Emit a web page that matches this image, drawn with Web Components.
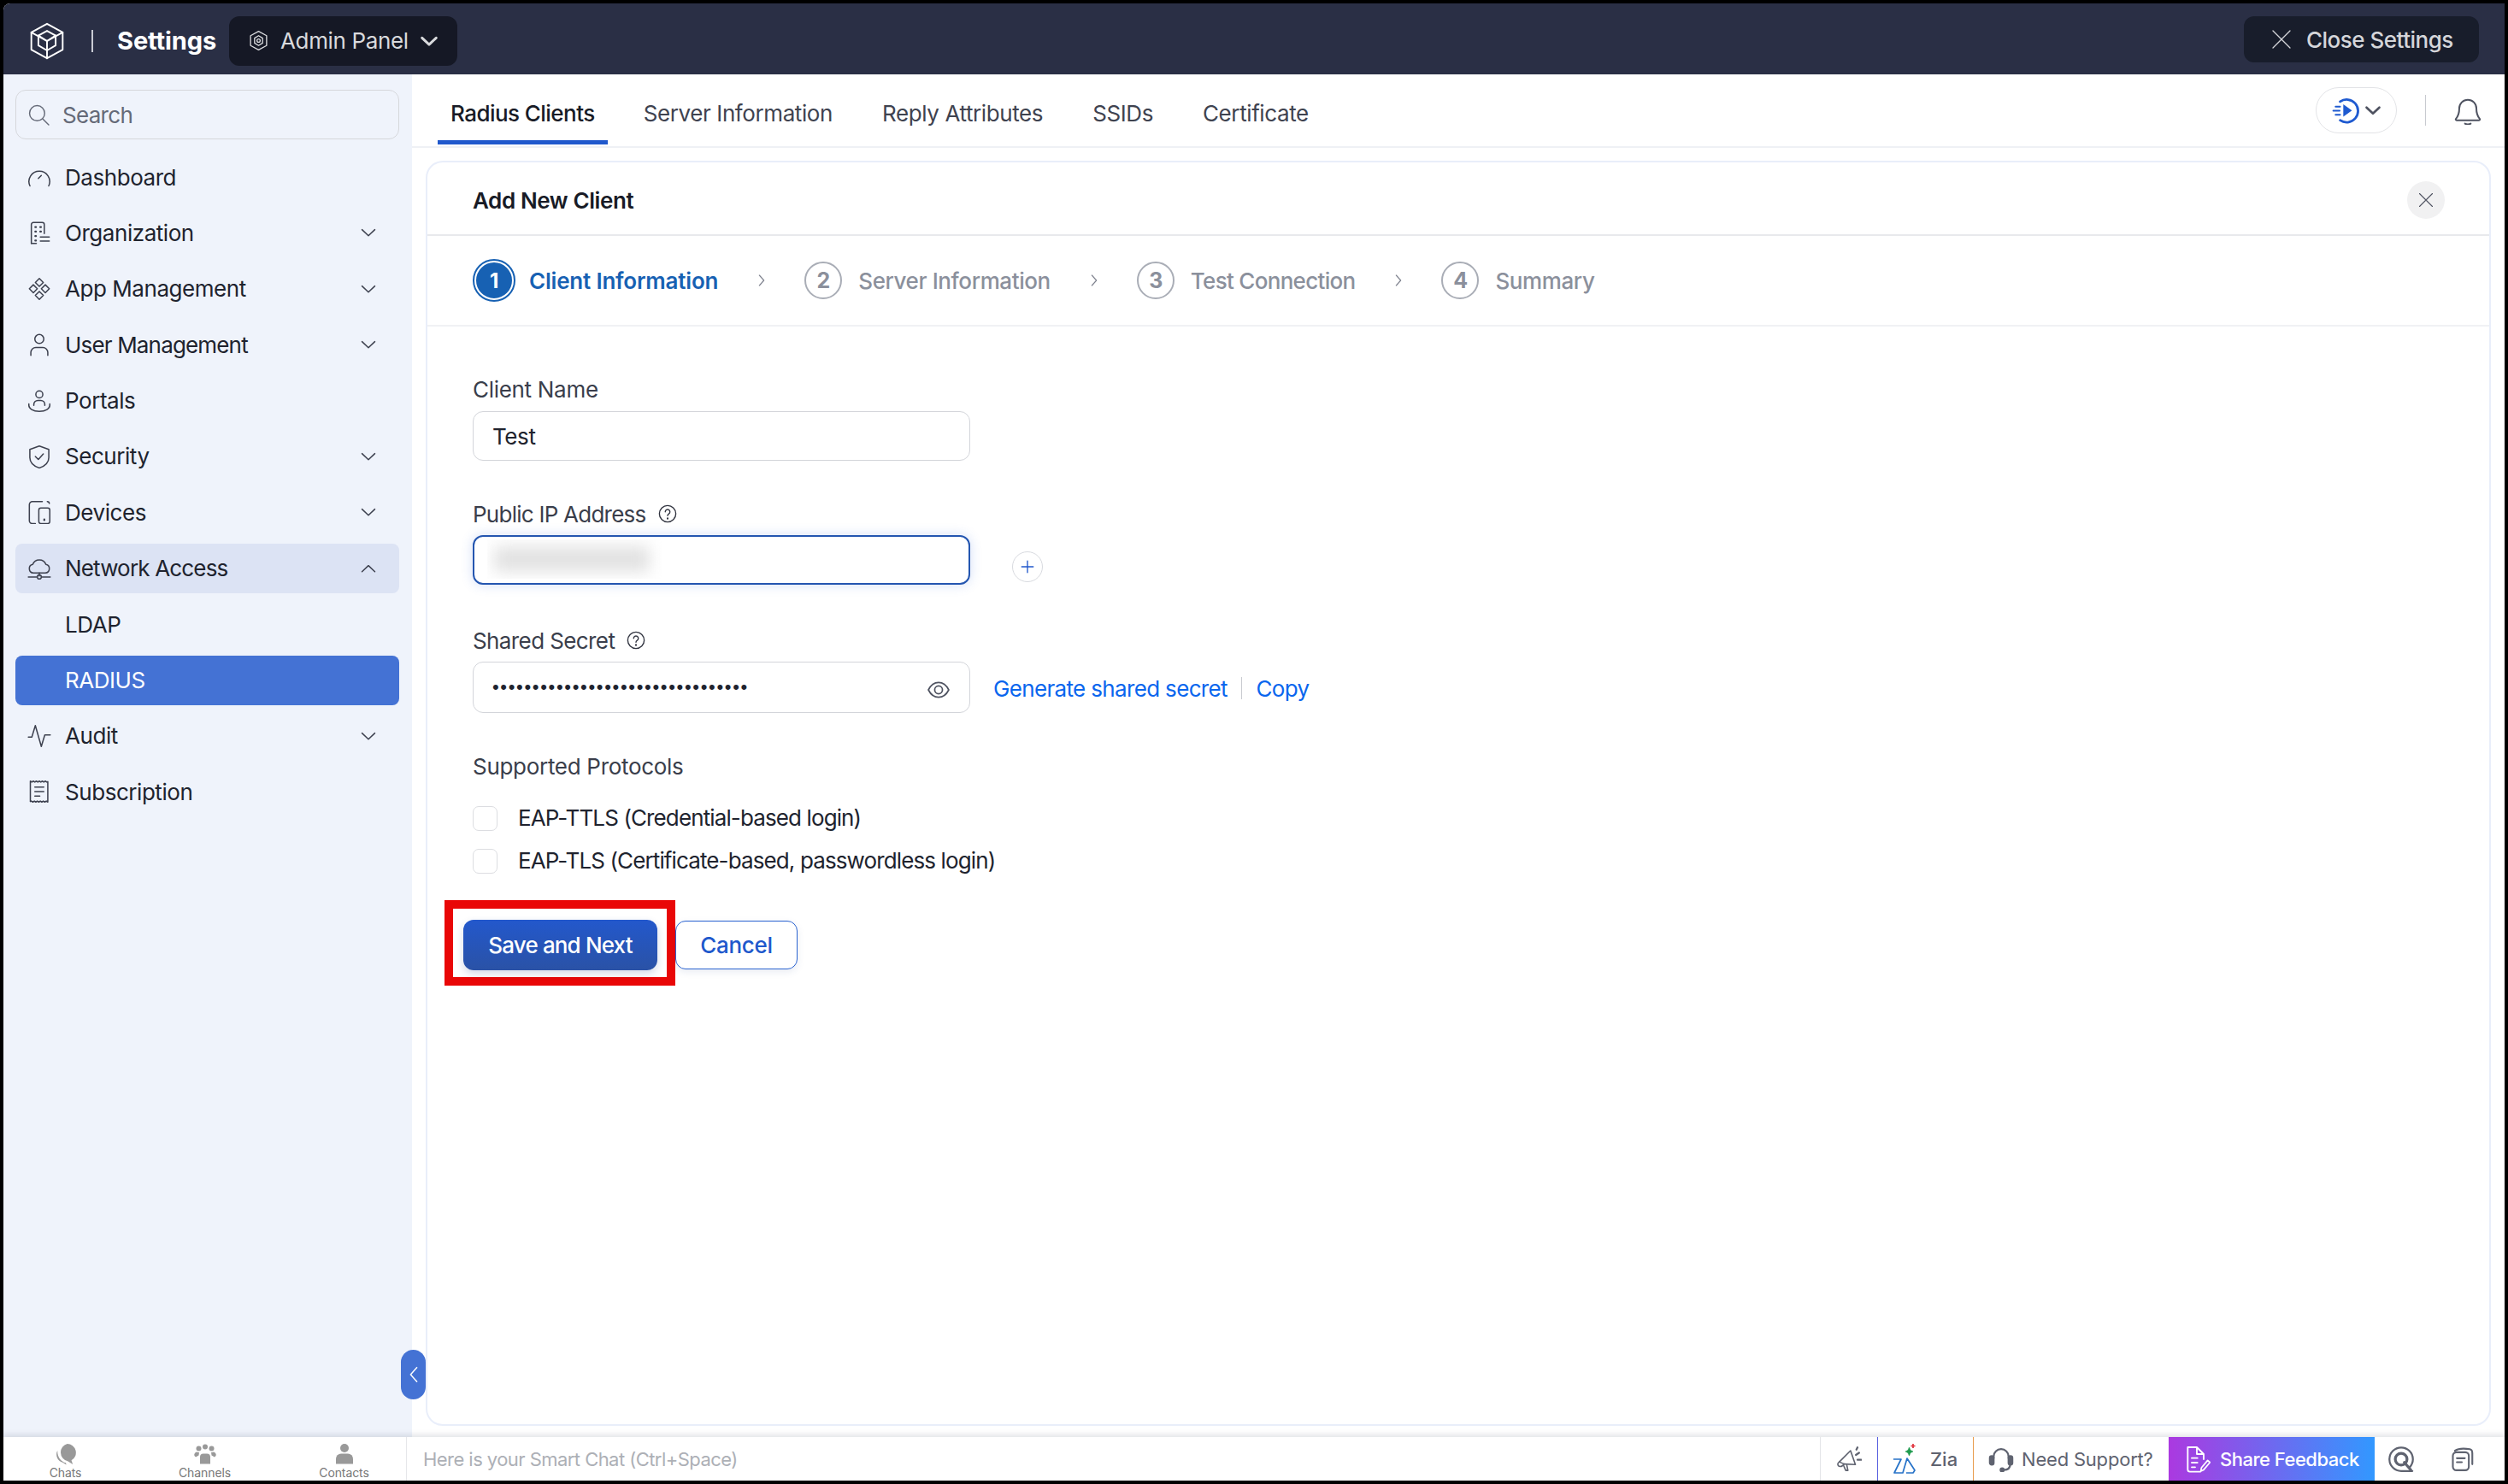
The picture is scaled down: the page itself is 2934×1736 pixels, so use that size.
<!DOCTYPE html>
<html lang="en">
<head>
<meta charset="utf-8">
<title>Settings - Add New Client</title>
<style>
  html, body { margin: 0; background: #000; }
  body { padding: 4px; width: 2926px; height: 1728px; font-family: Inter, "Noto Sans", sans-serif; }
</style>
</head>
<body>
<settings-app>
  <top-bar slot="top"></top-bar>
  <side-bar slot="side">
    <nav-item icon="dashboard">Dashboard</nav-item>
    <nav-item icon="org" caret="down">Organization</nav-item>
    <nav-item icon="apps" caret="down">App Management</nav-item>
    <nav-item icon="user" caret="down" style="letter-spacing:-0.83px">User Management</nav-item>
    <nav-item icon="portal">Portals</nav-item>
    <nav-item icon="shield" caret="down">Security</nav-item>
    <nav-item icon="devices" caret="down">Devices</nav-item>
    <nav-item icon="cloud" caret="up" state="open" style="letter-spacing:-0.83px">Network Access</nav-item>
    <nav-item>LDAP</nav-item>
    <nav-item state="active">RADIUS</nav-item>
    <nav-item icon="pulse" caret="down">Audit</nav-item>
    <nav-item icon="receipt">Subscription</nav-item>
  </side-bar>
  <tab-bar slot="tabs">
    <tab-item active>Radius Clients</tab-item>
    <tab-item>Server Information</tab-item>
    <tab-item>Reply Attributes</tab-item>
    <tab-item>SSIDs</tab-item>
    <tab-item>Certificate</tab-item>
  </tab-bar>
  <client-card slot="main">
    <step-list slot="steps">
      <step-item num="1" active>Client Information</step-item>
      <step-item num="2" style="letter-spacing:-0.4px">Server Information</step-item>
      <step-item num="3" style="letter-spacing:-0.7px">Test Connection</step-item>
      <step-item num="4" last style="letter-spacing:-0.4px">Summary</step-item>
    </step-list>
    <form-field label="Client Name" style="--label-gap:11px;margin-bottom:48px">
      <text-box>Test</text-box>
    </form-field>
    <form-field label="Public IP Address" help style="--label-gap:10px;--label-ls:-0.75px;margin-bottom:50px;margin-top:-1px">
      <text-box focused></text-box>
      <add-button></add-button>
    </form-field>
    <form-field label="Shared Secret" help style="--label-gap:10px;--label-ls:-0.6px;margin-bottom:47px">
      <text-box secret style="--box-h:60px">••••••••••••••••••••••••••••••••</text-box>
      <link-row></link-row>
    </form-field>
    <form-field label="Supported Protocols" style="--label-gap:32px;margin-bottom:31px">
      <check-list></check-list>
    </form-field>
    <form-actions></form-actions>
  </client-card>
  <chat-bar slot="bottom"></chat-bar>
</settings-app>

<script>
const ICONS = {
  dashboard: '<path d="M2.6 21a10.4 10.4 0 1 1 18.8 0"/><path d="M11 13.5l3-3"/>',
  org: '<path d="M4 23V4a2 2 0 0 1 2-2h9a2 2 0 0 1 2 2v9"/><path d="M4 23h5"/><path d="M8 6.5h.6M13 6.5h.6M8 11h.6M13 11h.6M8 15.5h.6M8 20h.6" stroke-width="2"/><path d="M13 16.5h9M13 20.5h9"/>',
  apps: '<path d="M12 1.5l4 4-4 4-4-4zM6 7.8l4 4-4 4-4-4zM18 7.8l4 4-4 4-4-4zM12 14.5l4 4-4 4-4-4z"/>',
  user: '<circle cx="12" cy="6.5" r="4.5"/><path d="M3.5 23v-3a5 5 0 0 1 5-5h7a5 5 0 0 1 5 5v3"/>',
  portal: '<circle cx="12" cy="5.5" r="3.5"/><path d="M6.5 16.5v-1a4 4 0 0 1 4-4h3a4 4 0 0 1 4 4v1"/><path d="M1.5 15c-.6 5 4.600 7.500 10.500 7.500S23.100 20 22.500 15"/>',
  shield: '<path d="M12 1.500l9.500 3.500v8c0 5-3.800 8.500-9.500 10.500C6.300 21.500 2.500 18 2.500 13V5z"/><path d="M8 12l3 3 5-5.500"/>',
  devices: '<path d="M15 1.500H5a3 3 0 0 0-3 3v16a3 3 0 0 0 3 3h3"/><path d="M20 1.500a2 2 0 0 1 2 2"/><rect x="11.500" y="8" width="11" height="15.500" rx="2"/><path d="M17 19.500v.5" stroke-width="2"/>',
  cloud: '<path d="M6 16.500a4.300 4.300 0 0 1-.6-8.500A7 7 0 0 1 18.600 8a4.300 4.300 0 0 1-.6 8.500z"/><path d="M12 16.500v3M1 20.500h8.500M14.500 20.500H23"/><circle cx="12" cy="20.500" r="2"/>',
  pulse: '<path d="M1 13h3.500l3.500-11.500 6 21 3.500-11.500H23"/>',
  receipt: '<path d="M3 1.500l1.500 1 1.500-1 1.500 1 1.500-1 1.500 1 1.500-1 1.500 1 1.500-1 1.500 1 1.500-1 1.500 1 1 -.5V22.500l-1.500-1-1.500 1-1.500-1-1.500 1-1.500-1-1.500 1-1.500-1-1.500 1-1.500-1-1.500 1-1.500-1-1 .5z"/><path d="M7.500 7.500h9M7.500 12h9M7.500 16.500h5"/>',
  search: '<circle cx="10" cy="10" r="8.500"/><path d="M16.500 16.500L23 23"/>',
  down: '<path d="M3 8l9 8.500L21 8"/>',
  up: '<path d="M3 16.500L12 8l9 8.500"/>',
  close: '<path d="M2 2l20 20M22 2L2 22"/>',
  right: '<path d="M8 3l8 9-8 9"/>',
  left: '<path d="M16 3L8 12l8 9"/>',
  plus: '<path d="M12 3v18M3 12h18"/>',
  eye: '<path d="M1 12c2.500-5 6.500-8 11-8s8.500 3 11 8c-2.500 5-6.500 8-11 8S3.500 17 1 12z"/><circle cx="12" cy="12" r="4.200"/>',
  help: '<circle cx="12" cy="12" r="10.500"/><path d="M9 9.500a3 3 0 1 1 4.500 2.600c-1 .6-1.500 1.200-1.500 2.400"/><path d="M12 17.600v.6" stroke-width="2.200"/>',
  bell: '<path d="M12 2a7.500 7.500 0 0 0-7.500 7.500c0 5-1 7-3 9.300-.4.500 0 1.200.6 1.200h19.800c.6 0 1-.7.6-1.200-2-2.300-3-4.300-3-9.300A7.500 7.500 0 0 0 12 2z"/><path d="M9.500 23c1.500.8 3.500.8 5 0"/>',
  logo: '<path d="M12 1l10 5.500v11L12 23 2 17.500v-11z"/><path d="M2 6.500L12 12l10-5.500M12 12v11"/><path d="M12 5.500l5.500 3v6.300L12 18l-5.500-3.200V8.500z"/><path d="M6.500 8.500L12 12l5.500-3.500"/>',
  hex: '<path d="M12 1.500l9 5v11l-9 5-9-5v-11z"/><path d="M12 6.500l4.500 2.700v5.600L12 17.500l-4.500-2.700V9.200z"/><circle cx="12" cy="12" r="1.800"/>',
  mega: '<path d="M3 14.500L13.500 4l4.500 13-10.500-.5z"/><path d="M3 14.500c-1.500 1-1.800 2.500-1 3.500s2.500 1.200 4 0l1.500-1.500"/><path d="M7 18l2 4.500h2l-1-5"/><path d="M18.500 8l3-2M20 12.500h3.500M19 3l1-2" stroke-width="1.800"/>',
  headset: '<path d="M5 11V9.500a7 7 0 0 1 14 0V11"/><rect x="1.500" y="9" width="3.500" height="8" rx="1.700" fill="currentColor"/><rect x="19" y="9" width="3.500" height="8" rx="1.700" fill="currentColor"/><path d="M20.500 17c0 3.500-2.500 5-6 5"/><circle cx="13" cy="22" r="1.500" fill="currentColor"/>',
  doc: '<path d="M4 1.500h8l6 6V12M12 1.500v6h6M15 23H6a2 2 0 0 1-2-2V1.500"/><path d="M7.500 11h5M7.500 15h5M7.500 19h3"/><path d="M15.500 22.500l.5-3 5.500-6.500 2 1.800-5.500 6.500z" stroke-width="1.300"/>',
  target: '<path d="M22.500 23H12A11 11 0 1 1 23 12c0 3-1.200 5.500-3 7.500"/><circle cx="12" cy="12" r="5.500" stroke-width="2.600"/><path d="M15 15l6 7" stroke-width="2.600"/>',
  notes: '<rect x="3" y="5" width="16" height="18" rx="3.500"/><path d="M5 3.500C8 1.500 14 1 20 2c2 .4 2.500 2 2.500 4v11"/><path d="M7 11h8M7 15h5"/>'
};

const svg = (name, size, width = 1.4, extra = "") =>
  `<svg viewBox="0 0 24 24" width="${size}" height="${size}" fill="none" stroke="currentColor" stroke-width="${width}" stroke-linecap="round" stroke-linejoin="round" ${extra}>${ICONS[name]}</svg>`;

class Base extends HTMLElement {
  paint(css, html) {
    if (this.shadowRoot) return;
    this.attachShadow({ mode: "open" }).innerHTML = `<style>${css}</style>${html}`;
  }
}

class SettingsApp extends Base {
  connectedCallback() {
    this.paint(`
      :host { display: grid; grid-template-columns: 478px 1fr; grid-template-rows: 83px 1fr 51px; width: 2926px; height: 1728px; background: #fff; border-top-left-radius: 8px; overflow: hidden; position: relative; }
      .top { grid-column: 1 / 3; }
      .main { display: flex; flex-direction: column; min-height: 0; }
      .bottom { grid-column: 1 / 3; }
      ::slotted([slot=top]), ::slotted([slot=bottom]) { min-width: 0; }
      .handle { position: absolute; left: 465px; top: 1575px; width: 29px; height: 58px; border-radius: 15px; background: #4472d4; color: #fff; display: flex; align-items: center; justify-content: center; }
    `, `
      <div class="top"><slot name="top"></slot></div>
      <slot name="side"></slot>
      <div class="main"><slot name="tabs"></slot><slot name="main"></slot></div>
      <div class="bottom"><slot name="bottom"></slot></div>
      <div class="handle">${svg("left", 22, 1.6)}</div>
    `);
  }
}

class TopBar extends Base {
  connectedCallback() {
    this.paint(`
      :host { display: flex; align-items: center; height: 83px; background: #2a2f45; color: #fff; padding: 4px 30px 0 29px; box-sizing: border-box; }
      .logo { display: flex; color: #fff; }
      .sep { width: 2px; height: 26px; background: #c9cbd3; margin: 0 28px 0 30px; }
      .title { font-size: 29px; font-weight: 700; letter-spacing: -0.1px; width: 131px; }
      .pill { display: flex; align-items: center; height: 58px; width: 267px; box-sizing: border-box; background: #151825; border-radius: 12px; padding-left: 22px; color: #d9dadd; font-size: 26px; }
      .pill span { margin: 0 13px 0 13px; letter-spacing: -0.35px; }
      .close { margin-left: auto; display: flex; align-items: center; height: 54px; width: 275px; box-sizing: border-box; padding-left: 32px; background: #181d2b; border-radius: 12px; color: #d5d6da; font-size: 26px; font-weight: 500; margin-bottom: 3px; }
      .close span { margin-left: 17px; letter-spacing: -0.5px; }
    `, `
      <span class="logo">${svg("logo", 44, 1.05)}</span>
      <i class="sep"></i>
      <span class="title">Settings</span>
      <div class="pill">${svg("hex", 25, 1.3)}<span>Admin Panel</span>${svg("down", 22, 3.2)}</div>
      <div class="close">${svg("close", 24, 1.3)}<span>Close Settings</span></div>
    `);
  }
}

class SideBar extends Base {
  connectedCallback() {
    this.paint(`
      :host { display: flex; flex-direction: column; background: #eff3fb; padding: 18px 15px 0 14px; box-sizing: border-box; height: 100%; }
      .search { display: flex; align-items: center; height: 58px; box-sizing: border-box; border: 1.5px solid #d5d7db; border-radius: 12px; padding-left: 14px; color: #656a78; font-size: 26px; margin-bottom: 15px; }
      .search span { margin-left: 15px; letter-spacing: -0.7px; }
      .list { display: grid; grid-auto-rows: 58px; row-gap: 7.4px; }
    `, `
      <div class="search">${svg("search", 25, 1.4)}<span>Search</span></div>
      <div class="list"><slot></slot></div>
    `);
  }
}

class NavItem extends Base {
  connectedCallback() {
    const icon = this.getAttribute("icon");
    const caret = this.getAttribute("caret");
    this.paint(`
      :host { display: flex; align-items: center; height: 58px; border-radius: 8px; color: #20232e; font-size: 26px; box-sizing: border-box; padding-left: 14px; letter-spacing: -0.45px; }
      :host([state=open]) { background: #dce3f4; }
      :host([state=active]) { background: #4472d4; color: #fff; }
      .ic { width: 28px; height: 28px; display: flex; color: #3d414f; margin-right: 16px; }
      .caret { margin-left: auto; margin-right: 26px; display: flex; color: #3d414f; }
    `, `
      <span class="ic">${icon ? svg(icon, 28, 1.3) : ""}</span>
      <span><slot></slot></span>
      ${caret ? `<span class="caret">${svg(caret, 20, 1.8)}</span>` : ""}
    `);
  }
}

class TabBar extends Base {
  connectedCallback() {
    this.paint(`
      :host { display: flex; align-items: stretch; height: 86px; box-sizing: border-box; padding-left: 30px; padding-right: 27px; border-bottom: 2px solid #eff1f5; }
      .tools { margin-left: auto; display: flex; align-items: center; height: 84px; }
      .play { display: flex; align-items: center; gap: 6px; width: 95px; height: 54px; box-sizing: border-box; padding-left: 18px; border: 1.5px solid #e2e3e6; border-radius: 27px; color: #1f5ad0; margin-top: -1px; }
      .play i { display: flex; color: #4f5361; }
      .sep { width: 1.5px; height: 36px; background: #c8cad0; margin: 0 33px; }
      .bell { display: flex; color: #4f5361; margin-top: 2px; }
    `, `
      <slot></slot>
      <div class="tools">
        <div class="play">
          <svg viewBox="0 0 30 30" width="32" height="32" fill="none" stroke="currentColor" stroke-width="2.600" stroke-linecap="round">
            <path d="M9 5.500A12.500 12.500 0 1 1 9 26"/>
            <path d="M12.500 8.500l9.500 6.800-9.500 6.800z" fill="currentColor" stroke="none"/>
            <path d="M4 11h5M1.500 15.500H8.500M4 20h5" stroke-width="1.800"/>
          </svg>
          <i>${svg("down", 20, 3.2)}</i>
        </div>
        <i class="sep"></i>
        <span class="bell">${svg("bell", 32, 1.5)}</span>
      </div>
    `);
  }
}

class TabItem extends Base {
  connectedCallback() {
    this.paint(`
      :host { display: flex; align-items: flex-start; padding: 30px 15px 0; margin-right: 28px; color: #3f4350; font-size: 26px; position: relative; letter-spacing: -0.4px; }
      :host([active]) { color: #181b26; font-weight: 500; letter-spacing: -0.55px; margin-right: 27px; }
      :host([active])::after { content: ""; position: absolute; left: 0; right: 0; bottom: 2px; height: 5px; background: #2058cc; }
    `, `<slot></slot>`);
  }
}

class ClientCard extends Base {
  connectedCallback() {
    this.paint(`
      :host { display: flex; flex-direction: column; flex: 1; min-height: 0; margin: 15px 16px 13px; border: 2px solid #e9eefa; border-radius: 20px; box-sizing: border-box; background: #fff; }
      header { display: flex; align-items: center; justify-content: space-between; height: 86px; box-sizing: border-box; padding: 4px 52px 0 53px; border-bottom: 2px solid #e8e9ec; }
      h1 { margin: 0; font-size: 26px; font-weight: 600; color: #181b26; letter-spacing: -0.4px; }
      .x { width: 44px; height: 44px; border-radius: 50%; background: #f1f1f2; color: #4f5361; display: flex; align-items: center; justify-content: center; }
      .form { padding: 58px 0 0 53px; display: flex; flex-direction: column; }
    `, `
      <header><h1>Add New Client</h1><span class="x">${svg("close", 18, 1.5)}</span></header>
      <slot name="steps"></slot>
      <div class="form"><slot></slot></div>
    `);
  }
}

class StepList extends Base {
  connectedCallback() {
    this.paint(`
      :host { display: flex; align-items: center; height: 106px; box-sizing: border-box; padding-left: 53px; border-bottom: 2px solid #f0f1f4; }
    `, `<slot></slot>`);
  }
}

class StepItem extends Base {
  connectedCallback() {
    this.paint(`
      :host { display: flex; align-items: center; color: #8b909c; font-size: 26px; font-weight: 500; }
      :host([active]) { color: #1761b3; font-weight: 600; letter-spacing: -0.2px; }
      .n { width: 44px; height: 44px; box-sizing: border-box; border: 2px solid #a9adb6; border-radius: 50%; display: flex; align-items: center; justify-content: center; margin-right: 19px; font-weight: 700; color: #8b909c; font-size: 25px; }
      :host([active]) .n { width: 50px; height: 50px; border: 4px solid #fff; outline: 2px solid #1761b3; outline-offset: -2px; background: #1761b3; color: #fff; margin-right: 16px; font-size: 24px; }
      .chev { display: flex; margin: 0 42px 0 43px; color: #7d818d; }
    `, `
      <span class="n">${this.getAttribute("num")}</span>
      <span><slot></slot></span>
      ${this.hasAttribute("last") ? "" : `<span class="chev">${svg("right", 16, 1.7)}</span>`}
    `);
  }
}

class FormField extends Base {
  connectedCallback() {
    this.paint(`
      :host { display: block; }
      label { display: flex; align-items: center; height: 30px; gap: 14px; color: #3a3e4b; font-size: 26px; margin-bottom: var(--label-gap, 10px); letter-spacing: var(--label-ls, -0.3px); }
      label span { display: flex; color: #30333f; }
      .row { display: flex; align-items: center; }
    `, `
      <label>${this.getAttribute("label")}${this.hasAttribute("help") ? `<span>${svg("help", 22, 1.5)}</span>` : ""}</label>
      <div class="row"><slot></slot></div>
    `);
  }
}

class TextBox extends Base {
  connectedCallback() {
    const secret = this.hasAttribute("secret");
    const focused = this.hasAttribute("focused");
    this.paint(`
      :host { display: flex; align-items: center; width: 582px; height: var(--box-h, 58px); box-sizing: border-box; border: 1.5px solid #d3d5da; border-radius: 12px; padding: 0 20px 0 22px; font-size: 26px; color: #20232e; position: relative; background: #fff; letter-spacing: -0.4px; }
      :host([focused]) { border: 2px solid #2456b0; box-shadow: 0 0 14px rgba(60,110,220,.22); }
      :host([secret]) { font-size: 22px; letter-spacing: 1.67px; padding-bottom: 1px; color: #20232e; font-family: "Liberation Sans", sans-serif; }
      .blur { position: absolute; left: 15px; top: 3px; width: 204px; height: 46px; overflow: hidden; }
      .blur i { display: block; margin: 8px 14px 8px 8px; height: 30px; background: #e2e2e2; filter: blur(9px); }
      .eye { position: absolute; right: 23px; top: 19px; display: flex; color: #4f5361; }
    `, `
      <slot></slot>
      ${focused ? `<div class="blur"><i></i></div>` : ""}
      ${secret ? `<span class="eye">${svg("eye", 26, 1.6)}</span>` : ""}
    `);
  }
}

class AddButton extends Base {
  connectedCallback() {
    this.paint(`
      :host { display: flex; align-items: center; justify-content: center; width: 36px; height: 36px; box-sizing: border-box; border: 1.5px solid #d8dadf; border-radius: 50%; color: #2058cc; margin: 16px 0 0 49px; }
    `, svg("plus", 18, 1.8));
  }
}

class LinkRow extends Base {
  connectedCallback() {
    this.paint(`
      :host { display: flex; align-items: center; margin: 2px 0 0 27px; color: #0a66ee; font-size: 26px; letter-spacing: -0.66px; }
      i { width: 1.5px; height: 26px; background: #c9cbd0; margin: 0 16px; }
    `, `<span>Generate shared secret</span><i></i><span>Copy</span>`);
  }
}

class CheckList extends Base {
  connectedCallback() {
    this.paint(`
      :host { display: grid; grid-auto-rows: 29px; row-gap: 21px; color: #20232e; font-size: 26px; letter-spacing: -0.88px; }
      div { display: flex; align-items: center; gap: 24px; }
      b { width: 29px; height: 29px; box-sizing: border-box; border: 1.5px solid #dcdde1; border-radius: 7px; }
      span { margin-top: -2px; }
    `, `
      <div><b></b><span>EAP-TTLS (Credential-based login)</span></div>
      <div><b></b><span>EAP-TLS (Certificate-based, passwordless login)</span></div>
    `);
  }
}

class FormActions extends Base {
  connectedCallback() {
    this.paint(`
      :host { display: flex; align-items: center; margin-left: -33px; font-size: 26px; font-weight: 500; }
      .mark { border: 10px solid #e90707; width: 270px; height: 100px; box-sizing: border-box; padding: 13px 0 0 12px; }
      .save { width: 227px; height: 59px; border-radius: 12px; background: linear-gradient(#2358cc, #2a52a6); color: #fff; display: flex; align-items: center; justify-content: center; box-shadow: 0 4px 10px rgba(40,70,140,.2); letter-spacing: -0.85px; }
      .cancel { width: 143px; height: 57px; box-sizing: border-box; border: 1.5px solid #2a62d0; border-radius: 12px; color: #2058cc; display: flex; align-items: center; justify-content: center; box-shadow: 0 3px 8px rgba(40,70,140,.1); letter-spacing: -0.3px; margin-top: 4px; }
    `, `
      <div class="mark"><div class="save">Save and Next</div></div>
      <div class="cancel">Cancel</div>
    `);
  }
}

class ChatBar extends Base {
  connectedCallback() {
    this.paint(`
      :host { display: flex; align-items: stretch; height: 51px; background: #fff; box-shadow: 0 -3px 6px rgba(60,65,85,.14); color: #5f6370; font-size: 22px; position: relative; }
      .tabs { width: 472px; display: grid; grid-template-columns: repeat(3, 163px); justify-content: center; border-right: 1.5px solid #e6e7ea; box-sizing: border-box; }
      .tabs div { display: flex; flex-direction: column; align-items: center; height: 51px; padding-top: 7px; box-sizing: border-box; position: relative; font-size: 14px; color: #777; }
      .tabs span { position: absolute; top: 33px; letter-spacing: -0.1px; }
      .ph { flex: 1; display: flex; align-items: center; padding-left: 19px; color: #adb0b6; letter-spacing: -0.55px; }
      .cell { display: flex; align-items: center; height: 51px; box-sizing: border-box; }
      .mega { width: 67px; border-left: 1.5px solid #e3e4e7; justify-content: center; }
      .zia { width: 112px; border-left: 1.5px solid #5b63e0; padding-left: 16px; gap: 15px; font-weight: 500; }
      .need { width: 229px; border-left: 1.5px solid #e89a4a; padding-left: 17px; gap: 9px; letter-spacing: -0.2px; }
      .share { width: 241px; background: linear-gradient(90deg, #ab39e0, #3298ff); color: #fff; padding-left: 17px; gap: 11px; letter-spacing: -0.5px; font-weight: 500; }
      .end { width: 62px; justify-content: center; }
      .last { width: 90px; justify-content: center; padding-right: 10px; }
    `, `
      <div class="tabs">
        <div>
          <svg width="27" height="26" viewBox="0 0 24 24" fill="#999"><path d="M14 1a9.500 9.500 0 0 1 4.500 17.800L20 23l-5.500-3.500A9.500 9.500 0 0 1 14 1z"/><path d="M3.500 8A9 9 0 0 0 9 21l4 2.500-.5-2C7 20 3 15 3.500 8z"/></svg>
          <span>Chats</span>
        </div>
        <div>
          <svg width="26" height="25" viewBox="0 0 26 24" fill="#999"><circle cx="13" cy="4" r="3"/><circle cx="5.500" cy="6" r="3"/><circle cx="20.500" cy="6" r="3"/><path d="M7 24v-8a4 4 0 0 1 4-4h4a4 4 0 0 1 4 4v8z"/><path d="M2 16a3 3 0 0 1 3-5.500h1L5.500 14z"/><path d="M24 16a3 3 0 0 0-3-5.500h-1l.5 3.500z"/></svg>
          <span>Channels</span>
        </div>
        <div>
          <svg width="24" height="25" viewBox="0 0 24 24" fill="#999"><circle cx="12" cy="5.500" r="5"/><path d="M2 24v-6a6 6 0 0 1 6-6h8a6 6 0 0 1 6 6v6z"/></svg>
          <span>Contacts</span>
        </div>
      </div>
      <div class="ph">Here is your Smart Chat (Ctrl+Space)</div>
      <div class="cell mega">${svg("mega", 30, 1.3)}</div>
      <div class="cell zia">
        <svg width="30" height="38" viewBox="0 0 30 38" fill="none" stroke="#2672c8" stroke-width="1.700" stroke-linejoin="round"><path d="M2 19h9L3 35h10l5-17 9 14-2 3h-8"/><path d="M16 10l3-1.500L20.500 5 22 8.500l3 1.500-3 1.500-1.500 3.500-1.500-3.500z" fill="#1e9b4e" stroke="#1e9b4e" stroke-width=".6"/><path d="M25 1v5M22.500 3.500h5" stroke="#e0303a"/></svg>
        <span>Zia</span>
      </div>
      <div class="cell need">${svg("headset", 30, 1.8)}<span>Need Support?</span></div>
      <div class="cell share">${svg("doc", 32, 1.4)}<span>Share Feedback</span></div>
      <div class="cell end">${svg("target", 30, 1.8)}</div>
      <div class="cell last">${svg("notes", 28, 1.8)}</div>
    `);
  }
}

const TAGS = {
  "settings-app": SettingsApp, "top-bar": TopBar, "side-bar": SideBar, "nav-item": NavItem,
  "tab-bar": TabBar, "tab-item": TabItem, "client-card": ClientCard, "step-list": StepList,
  "step-item": StepItem, "form-field": FormField, "text-box": TextBox, "add-button": AddButton,
  "link-row": LinkRow, "check-list": CheckList, "form-actions": FormActions, "chat-bar": ChatBar
};
Object.entries(TAGS).forEach(([tag, cls]) => customElements.define(tag, cls));
</script>
</body>
</html>
